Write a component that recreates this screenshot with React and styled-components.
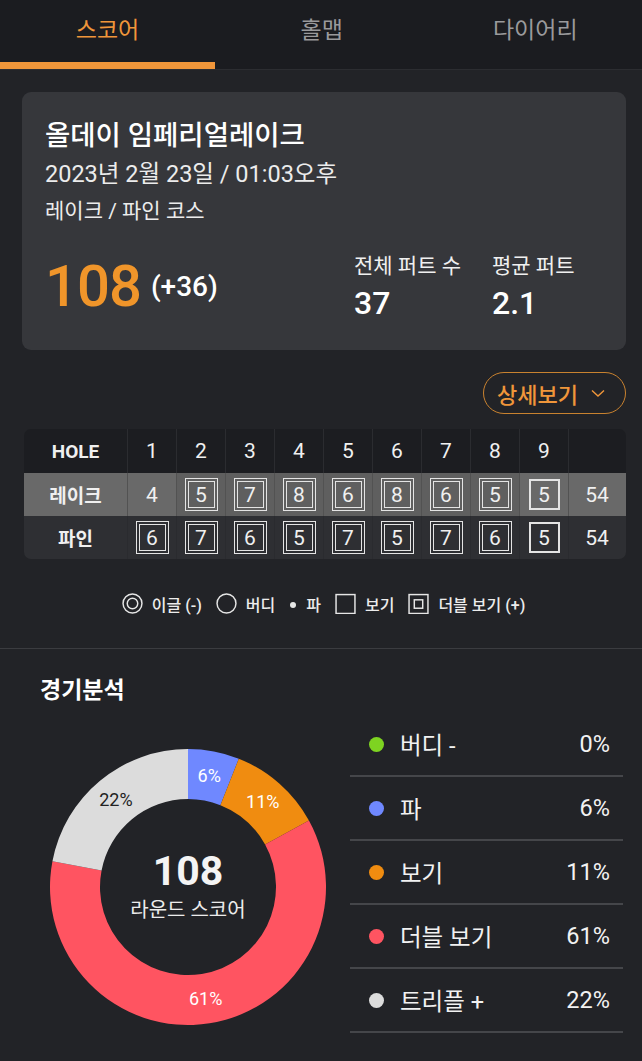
import React from 'react';
import styled, { createGlobalStyle } from 'styled-components';

const Global = createGlobalStyle`
  body {
    margin: 0;
    background: #222327;
    font-family: Roboto, "Noto Sans CJK KR", sans-serif;
    color: #f2f2f2;
  }
`;

const Page = styled.div`
  width: 642px;
  min-height: 1061px;
  background: #222327;
  overflow: hidden;
`;

const TabBar = styled.div`
  display: flex;
  height: 70px;
  background: #1b1c20;
  border-bottom: 1px solid #2c2d31;
  box-sizing: border-box;
`;

const Tab = styled.div`
  flex: ${p => (p.$active ? '0 0 215px' : '1')};
  display: flex;
  align-items: center;
  justify-content: center;
  padding-bottom: 6px;
  font-size: 23px;
  color: ${p => (p.$active ? '#f0963a' : '#9a9a9c')};
  border-bottom: 7px solid ${p => (p.$active ? '#f0963a' : 'transparent')};
  box-sizing: border-box;
`;

const Card = styled.div`
  margin: 22px 16px 0 22px;
  height: 258px;
  box-sizing: border-box;
  background: #36373b;
  border-radius: 9px;
  padding: 25px 23px 0;
`;

const Title = styled.div`
  font-size: 27.5px;
  font-weight: 500;
  line-height: 37px;
  color: #fff;
`;

const SubLine = styled.div`
  font-size: ${p => p.$size}px;
  line-height: ${p => p.$lh}px;
  color: #ececec;
`;

const ScoreRow = styled.div`
  display: flex;
  align-items: flex-start;
  margin-top: 24px;
`;

const Score = styled.div`
  display: flex;
  align-items: center;
  gap: 10px;
  flex: 0 0 309px;
  height: 68px;
`;

const Big = styled.span`
  font-size: 58px;
  line-height: 68px;
  font-weight: 500;
  color: #f0952a;
  letter-spacing: -1px;
`;

const Over = styled.span`
  font-size: 28px;
  font-weight: 500;
  color: #fff;
`;

const Stat = styled.div`
  display: flex;
  flex-direction: column;
  flex: ${p => (p.$fill ? '1' : '0 0 138px')};
  white-space: nowrap;
`;

const StatLabel = styled.span`
  font-size: 21px;
  color: #f0f0f0;
  line-height: 28px;
`;

const StatValue = styled.span`
  font-size: 32px;
  font-weight: 500;
  color: #fff;
  line-height: 46px;
`;

const ButtonRow = styled.div`
  display: flex;
  justify-content: flex-end;
  padding: 22px 16px 15px 0;
`;

const DetailButton = styled.button`
  display: flex;
  align-items: center;
  gap: 12px;
  height: 42px;
  padding: 0 19px 0 13px;
  background: transparent;
  border: 1.5px solid #c9822f;
  border-radius: 21px;
  color: #f0963a;
  font-family: inherit;
  font-size: 22px;
  font-weight: 500;
`;

const Table = styled.div`
  display: grid;
  grid-template-columns: 104px repeat(9, 49px) 1fr;
  grid-template-rows: 44px 43px 43px;
  margin: 0 16px 0 24px;
  border-radius: 7px;
  overflow: hidden;
`;

const rowBg = { head: '#1c1d21', lake: '#696969', pine: '#2e2f33' };
const sepColor = { head: '#2b2c30', lake: '#525252', pine: '#2a2b2f' };

const Cell = styled.div`
  display: flex;
  align-items: center;
  justify-content: center;
  background: ${p => (p.$dim ? '#5f5f5f' : rowBg[p.$row])};
  border-right: 1px solid ${p => (p.$last ? 'transparent' : sepColor[p.$row])};
  font-size: ${p => (p.$label ? '19px' : '21px')};
  font-weight: ${p => (p.$label ? 700 : 400)};
  color: #f0f0f0;
`;

const ScoreBox = styled.div`
  display: flex;
  align-items: center;
  justify-content: center;
  box-sizing: border-box;
  width: ${p => (p.$double ? 33 : 31)}px;
  height: ${p => (p.$double ? 33 : 31)}px;
  border: ${p => (p.$double ? '1.5px' : '2px')} solid #e4e4e4;
  padding: 2px;
`;

const Inner = styled.div`
  display: flex;
  align-items: center;
  justify-content: center;
  width: 100%;
  height: 100%;
  box-sizing: border-box;
  border: 1.5px solid #e4e4e4;
`;

const Legend = styled.div`
  display: flex;
  justify-content: center;
  align-items: center;
  gap: 14px;
  height: 89px;
  padding-left: 5px;
  font-size: 16px;
  font-weight: 500;
  color: #ececec;
  border-bottom: 1.5px solid #3b3c40;
`;

const LegendItem = styled.span`
  display: flex;
  align-items: center;
  gap: 9px;
`;

const Analysis = styled.div`
  padding: 27px 19px 0 40px;
`;

const SectionTitle = styled.div`
  font-size: 23px;
  font-weight: 700;
  line-height: 30px;
  color: #fff;
  margin-bottom: 7px;
`;

const ChartRow = styled.div`
  display: flex;
  align-items: flex-start;
  gap: 24px;
`;

const DonutWrap = styled.div`
  position: relative;
  width: 276px;
  height: 276px;
  margin: 36px 0 0 10px;
`;

const Center = styled.div`
  position: absolute;
  inset: 0;
  display: flex;
  flex-direction: column;
  align-items: center;
  justify-content: center;
  padding-top: 2px;
`;

const CenterNum = styled.div`
  font-size: 41px;
  font-weight: 700;
  line-height: 44px;
  color: #f4f4f4;
`;

const CenterLabel = styled.div`
  font-size: 20px;
  line-height: 34px;
  color: #ececec;
`;

const List = styled.div`
  flex: 1;
`;

const ListRow = styled.div`
  display: flex;
  align-items: center;
  height: 62px;
  padding: 0 13px 0 19px;
  border-bottom: 2px solid #45464a;
  font-size: 23.5px;
  color: #f2f2f2;
`;

const Dot = styled.span`
  width: 15px;
  height: 15px;
  border-radius: 50%;
  background: ${p => p.$color};
  margin-right: 16px;
`;

const Pct = styled.span`
  margin-left: auto;
`;

const holes = [1, 2, 3, 4, 5, 6, 7, 8, 9];
const lake = [[4, 0], [5, 2], [7, 2], [8, 2], [6, 2], [8, 2], [6, 2], [5, 2], [5, 1]];
const pine = [[6, 2], [7, 2], [6, 2], [5, 2], [7, 2], [5, 2], [7, 2], [6, 2], [5, 1]];

const segments = [
  { label: '버디 -', pct: 0, color: '#7ed321' },
  { label: '파', pct: 6, color: '#6f88ff', text: '#fff' },
  { label: '보기', pct: 11, color: '#f08c10', text: '#fff' },
  { label: '더블 보기', pct: 61, color: '#ff5461', text: '#fff' },
  { label: '트리플 +', pct: 22, color: '#dcdcdc', text: '#222' },
];

function Mark({ v, box }) {
  if (box === 0) return v;
  if (box === 1) return <ScoreBox>{v}</ScoreBox>;
  return (
    <ScoreBox $double>
      <Inner>{v}</Inner>
    </ScoreBox>
  );
}

function ScoreRowCells({ name, row, data }) {
  return (
    <>
      <Cell $row={row} $label>{name}</Cell>
      {data.map(([v, box], i) => (
        <Cell key={i} $row={row} $dim={row === 'lake' && box === 2}>
          <Mark v={v} box={box} />
        </Cell>
      ))}
      <Cell $row={row} $last>54</Cell>
    </>
  );
}

function Donut() {
  const cx = 138, cy = 138, R = 138, r = 88;
  let start = 0;
  const pt = (rad, a) => [cx + rad * Math.sin(a), cy - rad * Math.cos(a)];
  return (
    <svg width="276" height="276" viewBox="0 0 276 276">
      {segments.filter(s => s.pct > 0).map(s => {
        const a0 = (start / 100) * Math.PI * 2;
        const a1 = ((start + s.pct) / 100) * Math.PI * 2;
        start += s.pct;
        const large = a1 - a0 > Math.PI ? 1 : 0;
        const [x0, y0] = pt(R, a0);
        const [x1, y1] = pt(R, a1);
        const [x2, y2] = pt(r, a1);
        const [x3, y3] = pt(r, a0);
        const [lx, ly] = pt(113, (a0 + a1) / 2);
        return (
          <g key={s.label}>
            <path
              d={`M${x0} ${y0} A${R} ${R} 0 ${large} 1 ${x1} ${y1} L${x2} ${y2} A${r} ${r} 0 ${large} 0 ${x3} ${y3} Z`}
              fill={s.color}
            />
            <text x={lx} y={ly + 6} textAnchor="middle" fontSize="18" fill={s.text}
              fontFamily="Roboto, sans-serif">{s.pct}%</text>
          </g>
        );
      })}
    </svg>
  );
}

export default function App() {
  return (
    <Page>
      <Global />
      <TabBar>
        <Tab $active>스코어</Tab>
        <Tab>홀맵</Tab>
        <Tab>다이어리</Tab>
      </TabBar>

      <Card>
        <Title>올데이 임페리얼레이크</Title>
        <SubLine $size={23.5} $lh={40}>2023년 2월 23일 / 01:03오후</SubLine>
        <SubLine $size={21} $lh={34}>레이크 / 파인 코스</SubLine>
        <ScoreRow>
          <Score>
            <Big>108</Big>
            <Over>(+36)</Over>
          </Score>
          <Stat>
            <StatLabel>전체 퍼트 수</StatLabel>
            <StatValue>37</StatValue>
          </Stat>
          <Stat $fill>
            <StatLabel>평균 퍼트</StatLabel>
            <StatValue>2.1</StatValue>
          </Stat>
        </ScoreRow>
      </Card>

      <ButtonRow>
        <DetailButton>
          상세보기
          <svg width="16" height="12" viewBox="0 0 16 12" fill="none" stroke="#f0963a" strokeWidth="1.4">
            <path d="M2 3.5 L8 9 L14 3.5" />
          </svg>
        </DetailButton>
      </ButtonRow>

      <Table>
        <Cell $row="head" $label>HOLE</Cell>
        {holes.map(h => <Cell key={h} $row="head">{h}</Cell>)}
        <Cell $row="head" $last />
        <ScoreRowCells name="레이크" row="lake" data={lake} />
        <ScoreRowCells name="파인" row="pine" data={pine} />
      </Table>

      <Legend>
        <LegendItem>
          <svg width="21" height="21" viewBox="0 0 20 20" fill="none" stroke="#e6e6e6" strokeWidth="1.4">
            <circle cx="10" cy="10" r="9" /><circle cx="10" cy="10" r="5" />
          </svg>
          이글 (-)
        </LegendItem>
        <LegendItem>
          <svg width="21" height="21" viewBox="0 0 20 20" fill="none" stroke="#e6e6e6" strokeWidth="1.4">
            <circle cx="10" cy="10" r="9" />
          </svg>
          버디
        </LegendItem>
        <LegendItem>
          <svg width="8" height="20" viewBox="0 0 8 20" fill="#e6e6e6">
            <circle cx="4" cy="11" r="3" />
          </svg>
          파
        </LegendItem>
        <LegendItem>
          <svg width="21" height="21" viewBox="0 0 20 20" fill="none" stroke="#e6e6e6" strokeWidth="1.4">
            <rect x="1" y="1.5" width="18" height="18" />
          </svg>
          보기
        </LegendItem>
        <LegendItem>
          <svg width="21" height="21" viewBox="0 0 20 20" fill="none" stroke="#e6e6e6" strokeWidth="1.4">
            <rect x="1" y="1.5" width="18" height="18" /><rect x="6" y="6.5" width="8" height="8" />
          </svg>
          더블 보기 (+)
        </LegendItem>
      </Legend>

      <Analysis>
        <SectionTitle>경기분석</SectionTitle>
        <ChartRow>
          <DonutWrap>
            <Donut />
            <Center>
              <CenterNum>108</CenterNum>
              <CenterLabel>라운드 스코어</CenterLabel>
            </Center>
          </DonutWrap>
          <List>
            {segments.map(s => (
              <ListRow key={s.label}>
                <Dot $color={s.color} />
                {s.label}
                <Pct>{s.pct}%</Pct>
              </ListRow>
            ))}
          </List>
        </ChartRow>
      </Analysis>
    </Page>
  );
}
